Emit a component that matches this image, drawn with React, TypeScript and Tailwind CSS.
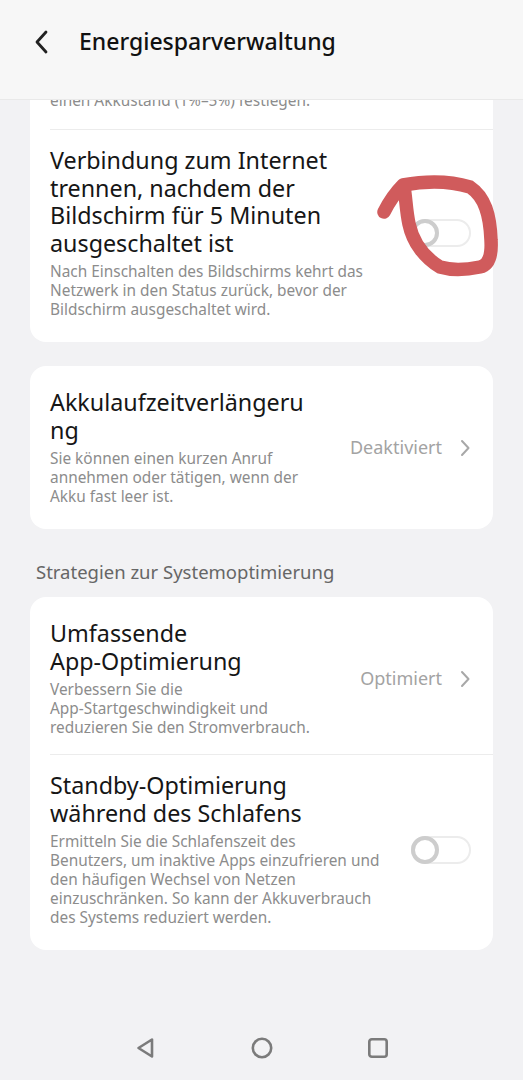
import { ReactNode } from 'react'

const font = { fontFamily: '"Noto Sans", "Liberation Sans", sans-serif' }

function Chevron() {
  return (
    <svg width="12" height="20" viewBox="0 0 12 20" className="ml-[17px]">
      <path d="M3 3 L9.5 10 L3 17" fill="none" stroke="#a8a8a8" strokeWidth="2" strokeLinecap="round" strokeLinejoin="round" />
    </svg>
  )
}

function Toggle() {
  return (
    <div className="relative w-[60px] h-[28px] rounded-full border-2 border-[#ececec] bg-white">
      <div className="absolute -left-[2px] -top-[2px] w-[28px] h-[28px] rounded-full border-[4px] border-[#cdcdcd] bg-white" />
    </div>
  )
}

function Item({ title, desc, right }: { title: ReactNode; desc: ReactNode; right: ReactNode }) {
  return (
    <div className="flex items-center pl-[20px] pr-[22px] pt-[17px] pb-[17px]">
      <div className="flex-1 min-w-0">
        <div className="text-[23.3px] leading-[27.7px] text-[#161616]">{title}</div>
        <div className="mt-[4.5px] text-[15.4px] leading-[19px] text-[#8c8c8c]">{desc}</div>
      </div>
      <div className="flex items-center shrink-0 pl-2">{right}</div>
    </div>
  )
}

function Value({ label }: { label: string }) {
  return (
    <>
      <span className="text-[18px] text-[#a3a3a3]">{label}</span>
      <Chevron />
    </>
  )
}

export default function App() {
  return (
    <div className="relative w-[523px] h-[1080px] bg-[#f2f2f4] overflow-hidden flex flex-col" style={font}>
      {/* header */}
      <div className="h-[100px] shrink-0 bg-[#f7f7f7] border-b border-[#e9e9e9] flex items-center pl-[33px] pb-[16px]">
        <svg width="18" height="26" viewBox="0 0 18 26">
          <path d="M13 3 L4 13 L13 23" fill="none" stroke="#222" strokeWidth="2.8" strokeLinecap="round" strokeLinejoin="round" />
        </svg>
        <span className="ml-[28px] text-[23px] font-medium text-[#111]">Energiesparverwaltung</span>
      </div>

      <div className="flex-1 overflow-hidden px-[30px]">
        {/* card 1 (scrolled) */}
        <div className="-mt-[9px] bg-white rounded-b-[16px] pb-[6px]">
          <div className="pl-[20px] pb-[19px] text-[15.4px] leading-[19px] text-[#8c8c8c]">
            einen Akkustand (1%–5%) festlegen.
          </div>
          <div className="ml-[20px] h-px bg-[#ececec]" />
          <Item
            title={<>Verbindung zum Internet<br />trennen, nachdem der<br />Bildschirm für 5 Minuten<br />ausgeschaltet ist</>}
            desc={<>Nach Einschalten des Bildschirms kehrt das<br />Netzwerk in den Status zurück, bevor der<br />Bildschirm ausgeschaltet wird.</>}
            right={<Toggle />}
          />
        </div>

        {/* card 2 */}
        <div className="mt-[24px] bg-white rounded-[16px] py-[6px]">
          <Item
            title={<>Akkulaufzeitverlängeru<br />ng</>}
            desc={<>Sie können einen kurzen Anruf<br />annehmen oder tätigen, wenn der<br />Akku fast leer ist.</>}
            right={<Value label="Deaktiviert" />}
          />
        </div>

        <div className="mt-[31px] pl-[6px] text-[18.5px] leading-[24px] text-[#666]">Strategien zur Systemoptimierung</div>

        {/* card 3 */}
        <div className="mt-[13px] bg-white rounded-[16px] py-[6px]">
          <Item
            title={<>Umfassende<br />App‑Optimierung</>}
            desc={<>Verbessern Sie die<br />App-Startgeschwindigkeit und<br />reduzieren Sie den Stromverbrauch.</>}
            right={<Value label="Optimiert" />}
          />
          <div className="ml-[20px] h-px bg-[#ececec]" />
          <Item
            title={<>Standby-Optimierung<br />während des Schlafens</>}
            desc={<>Ermitteln Sie die Schlafenszeit des<br />Benutzers, um inaktive Apps einzufrieren und<br />den häufigen Wechsel von Netzen<br />einzuschränken. So kann der Akkuverbrauch<br />des Systems reduziert werden.</>}
            right={<Toggle />}
          />
        </div>
      </div>

      {/* nav bar */}
      <div className="h-[62px] shrink-0 flex items-center justify-center gap-[94px] pb-[2px]">
        <svg width="22" height="22" viewBox="0 0 22 22">
          <path d="M17 2.5 L17 19.5 L3.5 11 Z" fill="none" stroke="#7b7b7b" strokeWidth="2.6" strokeLinejoin="round" />
        </svg>
        <svg width="22" height="22" viewBox="0 0 22 22">
          <circle cx="11" cy="11" r="9.2" fill="none" stroke="#7b7b7b" strokeWidth="2.6" />
        </svg>
        <svg width="22" height="22" viewBox="0 0 22 22">
          <rect x="2.3" y="2.3" width="17.4" height="17.4" rx="2.5" fill="none" stroke="#7b7b7b" strokeWidth="2.6" />
        </svg>
      </div>

      {/* red hand-drawn annotation */}
      <svg className="absolute left-0 top-0 pointer-events-none" width="523" height="1080" viewBox="0 0 523 1080">
        <path
          d="M384 212 C390 200 396 192 403 185 C425 181 450 181 470 187 C485 197 490 215 491 240 C492 256 489 265 480 267 C465 270 450 270 440 267 C425 258 413 243 409 224 C406 210 406 198 404 187"
          fill="none"
          stroke="#d05b5c"
          strokeWidth="13.5"
          strokeLinecap="round"
          strokeLinejoin="round"
        />
      </svg>
    </div>
  )
}
